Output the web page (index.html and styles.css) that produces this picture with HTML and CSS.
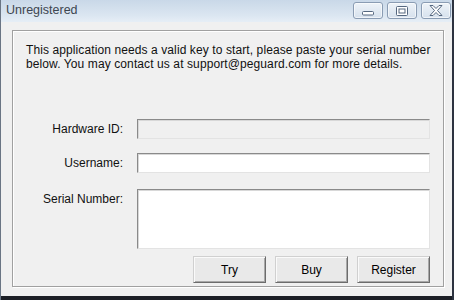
FILE: index.html
```html
<!DOCTYPE html>
<html lang="en">
<head>
<meta charset="UTF-8" />
<title>Unregistered</title>
<link rel="stylesheet" href="styles.css">
</head>
<body>
  <div class="window">
    <div class="titlebar">
      <span class="title">Unregistered</span>
      <div class="caption-buttons">
        <div class="cap-btn">
          <svg width="12" height="10" viewBox="0 0 12 10"><rect x="0.5" y="5.5" width="11" height="3.5" rx="1" fill="#fff" stroke="#55677f"/></svg>
        </div>
        <div class="cap-btn">
          <svg width="12" height="10" viewBox="0 0 12 10"><rect x="0.5" y="0.5" width="11" height="9" rx="1" fill="#fff" stroke="#55677f"/><rect x="3" y="3" width="6" height="4" fill="none" stroke="#55677f"/></svg>
        </div>
        <div class="cap-btn">
          <svg width="14" height="11" viewBox="0 0 14 11"><path d="M1 0.5h3l3 3 3-3h3l-4.5 5 4.5 5h-3l-3-3-3 3h-3l4.5-5z" fill="#fff" stroke="#55677f" stroke-linejoin="round"/></svg>
        </div>
      </div>
    </div>
    <div class="client">
      <div class="groupbox">
        <p class="intro">This application needs a valid key to start, please paste your serial number<br>below. You may contact us at support@peguard.com for more details.</p>
        <div class="form">
          <label class="lbl">Hardware ID:</label>
          <input class="field disabled" type="text" disabled>
          <label class="lbl">Username:</label>
          <input class="field" type="text">
          <label class="lbl lbl-serial">Serial Number:</label>
          <textarea class="field serial"></textarea>
        </div>
        <div class="buttons">
          <button class="btn">Try</button>
          <button class="btn">Buy</button>
          <button class="btn">Register</button>
        </div>
      </div>
    </div>
    <div class="taskbar"></div>
  </div>
</body>
</html>
```

FILE: styles.css
```css
body {
  margin: 0; padding: 0;
  font-family: "Liberation Sans", Arial, sans-serif;
  font-size: 12px;
  color: #000;
}
.window {
  width: 454px;
  height: 300px;
  display: flex;
  flex-direction: column;
  background: #f0f0f0;
  box-sizing: border-box;
  border-left: 1px solid #6a7584;
  border-right: 2px solid #2d3340;
}
.titlebar {
  height: 22px;
  flex: none;
  display: flex;
  align-items: flex-start;
  justify-content: space-between;
  background: linear-gradient(#c9d8e8, #dbe6f1 70%, #e6eef6);
}
.title {
  font-size: 12.5px;
  color: #3d4650;
  padding: 3px 0 0 5px;
}
.caption-buttons {
  display: flex;
  gap: 4px;
  padding: 2px 1px 0 0;
}
.cap-btn {
  width: 28px;
  height: 15px;
  border: 1px solid #8a9cb3;
  border-radius: 3px;
  background: linear-gradient(#eef3f8, #d6e1ed);
  display: flex;
  align-items: center;
  justify-content: center;
  box-shadow: inset 0 0 0 1px rgba(255,255,255,.6);
}
.client {
  flex: 1;
  min-width: 0;
  padding: 8px 8px 9px 11px;
  display: flex;
}
.groupbox {
  flex: 1;
  min-width: 0;
  border: 1px solid #a0a0a0;
  box-shadow: inset 1px 1px 0 #fff, 1px 1px 0 #fff;
  padding: 12px 13px 0 13px;
  display: flex;
  flex-direction: column;
}
.intro {
  margin: 0;
  line-height: 14px;
  letter-spacing: 0.1px;
  white-space: nowrap;
  color: #111;
}
.form {
  display: grid;
  grid-template-columns: 97px 293px;
  column-gap: 14px;
  row-gap: 14px;
  margin-top: 48px;
}
.lbl {
  text-align: right;
  padding-top: 3px;
  color: #111;
}
.lbl-serial {
  padding-top: 5px;
}
.field {
  box-sizing: border-box;
  height: 20px;
  margin: 0;
  border: 1px solid;
  border-color: #8a8a8a #e3e3e3 #e3e3e3 #8a8a8a;
  box-shadow: inset 1px 1px 0 #d8d8d8;
  background: #fff;
  font: inherit;
}
.field.disabled {
  background: #f0f0f0;
}
.serial {
  height: 60px;
  margin-top: 2px;
  resize: none;
}
.buttons {
  display: flex;
  justify-content: flex-end;
  gap: 9px;
  margin-top: 7px;
}
.btn {
  width: 73px;
  height: 27px;
  margin: 0;
  font-family: "Liberation Sans", Arial, sans-serif;
  font-size: 12px;
  color: #000;
  background: #e9e9e9;
  border: 1px solid;
  border-color: #d0d0d0 #6c6c6c #6c6c6c #d0d0d0;
  box-shadow: inset 1px 1px 0 #fafafa, inset -1px -1px 0 #a8a8a8;
}
.taskbar {
  height: 4px;
  flex: none;
  background: #1c1f26;
}
```
